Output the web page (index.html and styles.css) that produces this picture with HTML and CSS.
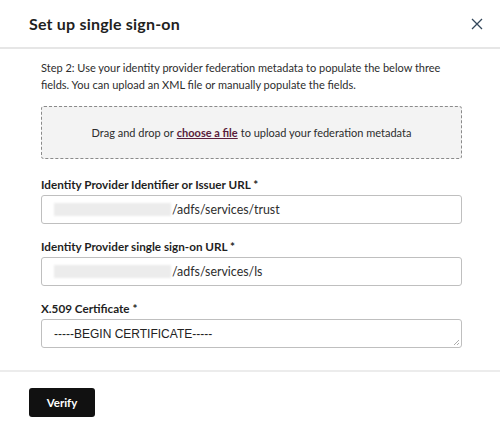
FILE: index.html
```html
<!DOCTYPE html>
<html>
<head>
<meta charset="utf-8">
<link rel="stylesheet" href="styles.css">
</head>
<body>
<div class="modal">
  <div class="header">
    <h1 class="title">Set up single sign-on</h1>
    <button class="close" aria-label="Close">
      <svg width="12" height="12" viewBox="0 0 12 12"><path d="M1 1L11 11M11 1L1 11" stroke="#33475b" stroke-width="1.3" fill="none"/></svg>
    </button>
  </div>
  <div class="body">
    <p class="intro">Step 2: Use your identity provider federation metadata to populate the below three fields. You can upload an XML file or manually populate the fields.</p>
    <div class="drop">Drag and drop or <a class="link" href="#">choose a file</a> to upload your federation metadata</div>
    <div class="field first">
      <label class="label">Identity Provider Identifier or Issuer URL *</label>
      <div class="input"><span class="blur"></span><span class="val">/adfs/services/trust</span></div>
    </div>
    <div class="field">
      <label class="label">Identity Provider single sign-on URL *</label>
      <div class="input"><span class="blur"></span><span class="val">/adfs/services/ls</span></div>
    </div>
    <div class="field">
      <label class="label">X.509 Certificate *</label>
      <div class="input textarea"><span class="cert">-----BEGIN CERTIFICATE-----</span>
        <svg class="grip" width="7" height="7" viewBox="0 0 7 7"><path d="M6 1L1 6M6 4L4 6" stroke="#999" stroke-width="0.8"/></svg>
      </div>
    </div>
  </div>
  <div class="footer">
    <button class="verify">Verify</button>
  </div>
</div>
</body>
</html>
```
FILE: styles.css
```css
* { box-sizing: border-box; }
body {
  margin: 0;
  background: #fff;
  font-family: Lato, "Noto Sans", sans-serif;
  color: #33475b;
}
.modal { width: 500px; height: 431px; overflow: hidden; }
.header {
  height: 49px;
  border-bottom: 2px solid #e6e6e6;
  display: flex;
  align-items: center;
  justify-content: space-between;
  padding: 0 16px 0 29px;
}
.title {
  margin: 0;
  font-size: 16px;
  font-weight: 700;
  color: #1f1f1f;
  letter-spacing: 0.2px;
}
.close {
  border: 0;
  background: none;
  padding: 0;
  width: 14px;
  height: 14px;
  display: flex;
  align-items: center;
  justify-content: center;
}
.body { padding: 10px 38px 0 41px; }
.intro {
  margin: 0;
  font-size: 11px;
  line-height: 17px;
  color: #2d2d2d;
}
.drop {
  margin-top: 13px;
  height: 53px;
  background: #f3f3f3;
  border: 1px dashed #8a8a8a;
  border-radius: 3px;
  display: flex;
  align-items: center;
  justify-content: center;
  font-size: 11px;
  color: #2d2d2d;
}
.link {
  color: #5a1d3c;
  font-weight: 700;
  margin: 0 3px;
  text-decoration: underline;
}
.field { margin-top: 15px; }
.field.first { margin-top: 18px; }
.label {
  display: block;
  font-size: 11.7px;
  line-height: 14px;
  font-weight: 700;
  color: #1f1f1f;
  margin-bottom: 4px;
}
.input {
  height: 29px;
  border: 1px solid #bfbfbf;
  border-radius: 3px;
  display: flex;
  align-items: center;
  padding-left: 12px;
  font-size: 12.4px;
  color: #2d2d2d;
  position: relative;
}
.textarea { margin-top: 4px; }
.blur {
  width: 117px;
  height: 13px;
  background: #ececec;
  filter: blur(1px);
}
.val { margin-left: 1px; }
.cert {
  font-family: "Liberation Sans", Arial, sans-serif;
  font-size: 12px;
  color: #222;
}
.grip { position: absolute; right: 1px; bottom: 1px; }
.footer {
  margin-top: 22px;
  border-top: 2px solid #ececec;
  padding: 16px 29px;
}
.verify {
  width: 66px;
  height: 29px;
  background: #111;
  color: #fff;
  border: 0;
  border-radius: 3px;
  font-family: Lato, sans-serif;
  font-weight: 700;
  font-size: 11.5px;
}
```
